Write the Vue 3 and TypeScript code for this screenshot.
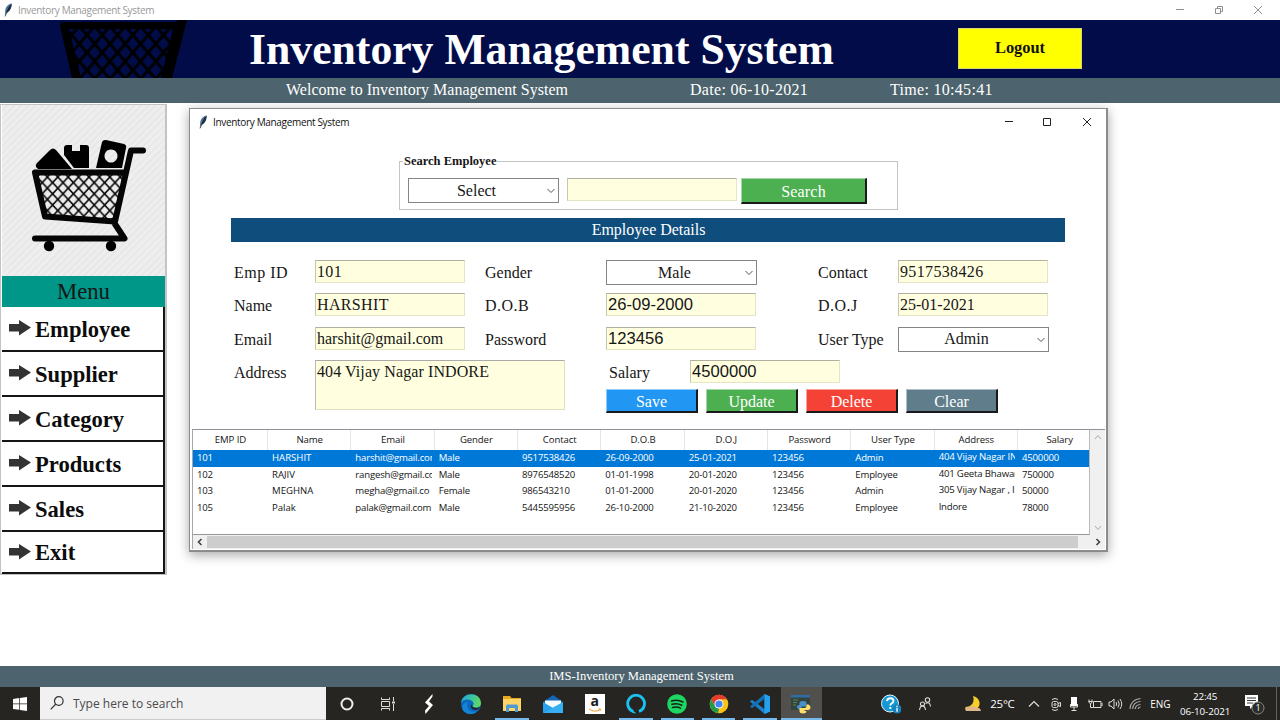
<script setup lang="ts">
interface Employee {
  id: string
  name: string
  email: string
  gender: string
  contact: string
  dob: string
  doj: string
  password: string
  type: string
  address: string
  salary: string
}

const menuItems: string[] = ['Employee', 'Supplier', 'Category', 'Products', 'Sales', 'Exit']

const columns: { key: keyof Employee; label: string }[] = [
  { key: 'id', label: 'EMP ID' },
  { key: 'name', label: 'Name' },
  { key: 'email', label: 'Email' },
  { key: 'gender', label: 'Gender' },
  { key: 'contact', label: 'Contact' },
  { key: 'dob', label: 'D.O.B' },
  { key: 'doj', label: 'D.O.J' },
  { key: 'password', label: 'Password' },
  { key: 'type', label: 'User Type' },
  { key: 'address', label: 'Address' },
  { key: 'salary', label: 'Salary' },
]

const employees: Employee[] = [
  { id: '101', name: 'HARSHIT', email: 'harshit@gmail.com', gender: 'Male', contact: '9517538426', dob: '26-09-2000', doj: '25-01-2021', password: '123456', type: 'Admin', address: '404 Vijay Nagar IN', salary: '4500000' },
  { id: '102', name: 'RAJIV', email: 'rangesh@gmail.co', gender: 'Male', contact: '8976548520', dob: '01-01-1998', doj: '20-01-2020', password: '123456', type: 'Employee', address: '401 Geeta Bhawan', salary: '750000' },
  { id: '103', name: 'MEGHNA', email: 'megha@gmail.co', gender: 'Female', contact: '986543210', dob: '01-01-2000', doj: '20-01-2020', password: '123456', type: 'Admin', address: '305 Vijay Nagar , I', salary: '50000' },
  { id: '105', name: 'Palak', email: 'palak@gmail.com', gender: 'Male', contact: '5445595956', dob: '26-10-2000', doj: '21-10-2020', password: '123456', type: 'Employee', address: 'Indore', salary: '78000' },
]

const selectedId = '101'
</script>

<template>
  <div class="screen">
    <div class="titlebar">
      <svg class="feather" viewBox="0 0 10 14"><path d="M8.600.6C5.400 1 2.600 4 2.300 7.200L1.800 13l1.400-3.200C6 9.600 8.600 5.400 8.600.6z" fill="#4a7197" /><path d="M8.600.6C6.800 3 4.800 5.400 3.200 9.800 6 9.600 9 5.400 8.600.6z" fill="#27384f" /><path d="M7 2.600 2 13.400" stroke="#111" stroke-width=".7" /></svg>
      <span class="win-name main-name">Inventory Management System</span>
      <svg class="main-controls" viewBox="0 0 90 12" fill="none" stroke="#8f8f8f" stroke-width="1"><path d="M1 5.500h8M40.500 4.500h5v5h-5zM42.500 4.500v-2h5v5h-2M79 2l8 8M87 2l-8 8" /></svg>
    </div>
    <header class="header">
      <svg class="header-cart" viewBox="0 0 130 58">
        <defs><pattern id="hmesh" width="15.300" height="17.600" patternUnits="userSpaceOnUse" x="11.700" y="15"><path d="M-3-3.450 18.300 21.050M18.300-3.450-3 21.050" stroke="#000" stroke-width="3" /></pattern></defs>
        <path d="M9 8h108L104 58H19z" fill="url(#hmesh)" />
        <path d="M0 6Q0 2 4 2h112l2-2h9L112 58H101L113 9H9L21 58H12z" fill="#000" />
      </svg>
      <h1>Inventory Management System</h1>
      <button class="logout">Logout</button>
    </header>
    <div class="status">
      <span class="welcome">Welcome to Inventory Management System</span>
      <span class="date">Date: 06-10-2021</span>
      <span class="time">Time: 10:45:41</span>
    </div>

    <main class="workspace">
      <aside class="sidebar">
        <div class="logo">
          <svg viewBox="0 0 116 112">
            <defs><pattern id="mesh" width="10.400" height="11.200" patternUnits="userSpaceOnUse" x="5" y="36"><path d="M-2-2.154 12.400 13.354M12.400-2.154-2 13.354" stroke="#050505" stroke-width="1.600" /></pattern></defs>
            <path d="M4 33h88l-8 46-70-4z" fill="url(#mesh)" />
            <path d="M3 31.500h90M3 31.500l10 44 70 5L99 9.500h12M81 80l11.500 17.500H3" fill="none" stroke="#050505" stroke-width="6" stroke-linecap="round" stroke-linejoin="round" />
            <circle cx="17" cy="105" r="5.200" /><circle cx="79" cy="105" r="5.200" />
            <path d="M6 28q-4-3-1-6L18 9q3-3 6 0l16 19z" />
            <path d="M32 7q0-3 3-3h5v6h8V4h6q3 0 3 3v20H42L32 14z" />
            <path fill-rule="evenodd" d="M70 1q1-2.500 4-2l18 4q3 1 2 4L90 27H64zM79 8.500a6.500 6.500 0 1 0 .01 0z" />
          </svg>
        </div>
        <div class="menu-title">Menu</div>
        <button v-for="item in menuItems" :key="item" class="menu-item">
          <svg viewBox="0 0 22 16"><path d="M0 4h10V0l12 7.500L10 15.500V11.500H0z" fill="#333" /></svg>
          <span>{{ item }}</span>
        </button>
      </aside>

      <section class="window">
        <div class="window-title">
          <svg class="feather" viewBox="0 0 10 14"><path d="M8.600.6C5.400 1 2.600 4 2.300 7.200L1.800 13l1.400-3.200C6 9.600 8.600 5.400 8.600.6z" fill="#4a7197" /><path d="M8.600.6C6.800 3 4.800 5.400 3.200 9.800 6 9.600 9 5.400 8.600.6z" fill="#27384f" /><path d="M7 2.600 2 13.400" stroke="#111" stroke-width=".7" /></svg>
          <span class="win-name">Inventory Management System</span>
          <svg class="controls" viewBox="0 0 90 12" fill="none" stroke="#222" stroke-width="1"><path d="M1 5.500h8M39.500 2.500h7v7h-7zM79 2l8 8M87 2l-8 8" /></svg>
        </div>

        <fieldset class="search">
          <legend>Search Employee</legend>
          <div class="combo">Select<svg viewBox="0 0 8 6"><path d="M.5 1 4 4.500 7.500 1" /></svg></div>
          <div class="entry search-entry"></div>
          <button class="btn green search-btn">Search</button>
        </fieldset>

        <div class="details-bar">Employee Details</div>

        <div class="form">
          <label class="loose">Emp ID</label><div class="entry wide">101</div>
          <label>Gender</label><div class="combo">Male<svg viewBox="0 0 8 6"><path d="M.5 1 4 4.500 7.500 1" /></svg></div>
          <label>Contact</label><div class="entry wide">9517538426</div>
          <label>Name</label><div class="entry wide">HARSHIT</div>
          <label class="loose">D.O.B</label><div class="entry sans">26-09-2000</div>
          <label class="loose">D.O.J</label><div class="entry">25-01-2021</div>
          <label>Email</label><div class="entry">harshit@gmail.com</div>
          <label>Password</label><div class="entry sans">123456</div>
          <label>User Type</label><div class="combo">Admin<svg viewBox="0 0 8 6"><path d="M.5 1 4 4.500 7.500 1" /></svg></div>
        </div>
        <div class="form-bottom">
          <label class="address-label">Address</label>
          <div class="textarea">404 Vijay Nagar INDORE</div>
          <div class="salary-block">
            <div class="salary-row"><label>Salary</label><div class="entry sans">4500000</div></div>
            <div class="actions">
              <button class="btn blue">Save</button>
              <button class="btn green">Update</button>
              <button class="btn red">Delete</button>
              <button class="btn slate">Clear</button>
            </div>
          </div>
        </div>

        <div class="table-frame">
          <div class="table-main">
            <div class="table">
              <div class="row head"><span v-for="c in columns" :key="c.key">{{ c.label }}</span></div>
              <div v-for="e in employees" :key="e.id" class="row" :class="{ selected: e.id === selectedId }">
                <span v-for="c in columns" :key="c.key" :class="c.key"><i>{{ e[c.key] }}</i></span>
              </div>
            </div>
            <div class="vscroll">
              <svg viewBox="0 0 8 6"><path d="M1 5l3-3.500L7 5" /></svg>
              <svg viewBox="0 0 8 6"><path d="M1 1l3 3.500L7 1" /></svg>
            </div>
          </div>
          <div class="hscroll">
            <svg viewBox="0 0 6 8"><path d="M4.500 1 1.500 4l3 3" /></svg>
            <div class="thumb"></div>
            <svg viewBox="0 0 6 8"><path d="M1.500 1l3 3-3 3" /></svg>
          </div>
        </div>
      </section>
    </main>

    <footer class="footer">IMS-Inventory Management System</footer>

    <nav class="taskbar">
      <div class="start"><svg viewBox="0 0 14 14"><path d="M0 2l6.300-.9v5.500H0zM7 1l7-1v6.600H7zM0 7.300h6.300v5.500L0 12zM7 7.300h7V14l-7-1z" fill="#fff" /></svg></div>
      <div class="searchbox"><svg viewBox="0 0 14 14"><circle cx="8.800" cy="5" r="4.300" /><path d="M5.800 8 .7 13.300" /></svg><span>Type here to search</span></div>
      <div class="apps">
        <div class="app"><svg viewBox="0 0 20 20"><circle cx="10" cy="10" r="5.500" fill="none" stroke="#eee" stroke-width="2" /></svg></div>
        <div class="app"><svg viewBox="0 0 20 20" fill="none" stroke="#ddd"><path d="M3.500 7.500h8v5h-8zM3.500 3.500v2h8v-2M3.500 16.500v-2h8v2M15.500 3v4M15.500 10v7" /><path d="M14 8.500h3" stroke-width="2" /></svg></div>
        <div class="app"><svg viewBox="0 0 20 20"><path d="M13.500 0 6 8.500l4 3.500-4 4.500.5 3.500 7.500-9-4-3.500 3.500-5z" fill="#fff" /></svg></div>
        <div class="app"><svg viewBox="0 0 20 20">
          <defs><linearGradient id="edge" x1="0" y1="0" x2="1" y2=".3"><stop offset="0" stop-color="#1ba5e8" /><stop offset="1" stop-color="#5bd76a" /></linearGradient></defs>
          <circle cx="10" cy="10" r="10" fill="#0b68be" /><path d="M0 9C1-2 19-3 20 9c0 4-4 5.500-8 4-1-1 1-2 .5-4C11 5 3 4 0 9z" fill="url(#edge)" /><path d="M7 8c-3 6 2 11 9 9.500-4 4-11 3-14-1C0 12 3 8 7 8z" fill="#1484d6" /><path d="M12 13c3 1.500 6 1 7.500-.5-1 2-3 3.500-5 3.500-3.500 0-6-3-4-6 0 1 0 2 1.500 3z" fill="#22282d" />
        </svg></div>
        <div class="app open"><svg viewBox="0 0 20 20"><path d="M1 2h7l1.500 2H19v13H1z" fill="#e9a91d" /><path d="M1 5h18v12H1z" fill="#fdd466" /><path d="M4 18v-6q0-1.500 1.500-1.500h9Q16 10.500 16 12v6h-3v-4H7v4z" fill="#4a9bd6" /></svg></div>
        <div class="app"><svg viewBox="0 0 20 20"><path d="M0 8l10-7 10 7v11H0z" fill="#1266b4" /><path d="M2 6.500h16V14H2z" fill="#f5fafe" /><path d="M0 8l10 6-10 5z" fill="#2aa1ec" /><path d="M20 8v11H0z" fill="#35aef2" /></svg></div>
        <div class="app amazon"><div><b>a</b><svg viewBox="0 0 14 5"><path d="M1 1q6 4 11 .5M10.500 1l2 0-.5 2" fill="none" stroke="#f29a26" /></svg></div></div>
        <div class="app open"><svg viewBox="0 0 20 20"><path d="M7.200 17.500A8.400 8.400 0 1 1 13 17.500" fill="none" stroke="#19c2f0" stroke-width="2.800" /><path d="M6 16l4.500 3.500-3.800-.5z" fill="#19c2f0" /></svg></div>
        <div class="app open"><svg viewBox="0 0 20 20"><circle cx="10" cy="10" r="9.800" fill="#1ed760" /><path d="M4.500 7q6-1.800 11.500 1M5 10.300q5-1.500 9.800.9M5.500 13.400q4.500-1.200 8 .7" fill="none" stroke="#182019" stroke-width="1.600" stroke-linecap="round" /></svg></div>
        <div class="app open"><svg viewBox="0 0 20 20"><circle cx="10" cy="10" r="9.300" fill="#fbc116" /><path d="M2 5.300A9.300 9.300 0 0 1 18 5.300H10L6 12z" fill="#e33b2e" /><path d="M2 5.300 6.200 12.500 10 14.500 9 19.200A9.300 9.300 0 0 1 2 5.300z" fill="#229b4e" /><circle cx="10" cy="10" r="4.500" fill="#fff" /><circle cx="10" cy="10" r="3.600" fill="#4285f4" /></svg></div>
        <div class="app open"><svg viewBox="0 0 20 20"><path d="M14.500 0 20 2.500v15L14.500 20 0 7.500 2 5.700l12.500 9.500z" fill="#1782ce" /><path d="M14.500 0v4.800L2 14.300 0 12.500z" fill="#1270b8" /><path d="M14.500 0 20 2.500v15L14.500 20z" fill="#25a0ef" /></svg></div>
        <div class="app open active"><svg viewBox="0 0 20 20"><path d="M0 1h19v15H0z" fill="#34443d" /><path d="M0 1h19v2.500H0z" fill="#2f6ca5" /><path d="M2 6h5M2 8.500h4M2 11h3" stroke="#568557" /><path d="M8.500 11V9q0-2 3.500-2t3.500 2v3.500h-5v3H8q-2-.5-2-2.700T8.500 11z" fill="#4a90c8" /><path d="M15.500 10.500h2q2 1 2 3t-2 2.500h-4v1h2q0 2.500-3.500 2.500t-3.500-2.500V14h5q2 0 2-2z" fill="#ffdf68" /></svg></div>
      </div>
      <div class="tray">
        <div class="t-help"><svg viewBox="0 0 20 20"><circle cx="9" cy="9.500" r="8.500" fill="#1598d3" stroke="#e8f5fb" /><path d="M6 7.200q.3-3 3.300-3t3.200 2.600q0 1.700-2 2.700-1.200.7-1.200 2M9.300 13v2" fill="none" stroke="#fff" stroke-width="1.900" /><circle cx="16" cy="15" r="4.600" fill="#1684bd" /><path d="M16 13.800v4M16 11.800v1.200" stroke="#fff" stroke-width="1.300" /></svg></div>
        <div class="t-people"><svg viewBox="0 0 14 14" fill="none" stroke="#ddd" stroke-width="1.100"><circle cx="4.500" cy="7" r="2" /><path d="M1.500 13q.5-4 3-4t3 4" /><circle cx="9.500" cy="3" r="2.200" /><path d="M7.500 6.500q4.500-2.500 5 3" /></svg></div>
        <div class="t-moon"><svg viewBox="0 0 20 18"><path d="M10 1c9 2 9 14-1 14-5 0-7-3-7-3 7 0 10-5 8-11z" fill="#f9cd27" /><path d="M2 14q1-3 5-2 4-3 6 1 4-1 5 3H3z" fill="#dfb789" /></svg></div>
        <span class="temp">25°C</span>
        <div class="t-caret"><svg viewBox="0 0 12 8"><path d="M1 6.500 6 1.500l5 5" fill="none" stroke="#ddd" stroke-width="1.200" /></svg></div>
        <div class="t-cam"><svg viewBox="0 0 12 14" fill="none" stroke="#ddd"><rect x="2" y="4.500" width="6" height="6" rx="1.500" /><circle cx="5" cy="7.500" r="1" /><path d="M8 6.500l2.500-1v4l-2.500-1M2 2.500q3-2 6 0M2 12.500q3 2 6 0" /></svg></div>
        <div class="t-mic"><svg viewBox="0 0 12 14"><rect x="3" y="0" width="6" height="9" fill="#fff" /><path d="M2.500 7v3h7V7M6 10v3.500M3.500 13.500h5" stroke="#ddd" fill="none" /></svg></div>
        <div class="t-bat"><svg viewBox="0 0 15 12" fill="none" stroke="#ddd"><path d="M5.500 3.500h7.500v6H5.500zM14 5v3M1 1.500v3q1.500 2 3 0v-3M2.500 5.500v4h3M.5 3.500h4" /></svg></div>
        <div class="t-vol"><svg viewBox="0 0 15 12" fill="none" stroke="#ddd"><path d="M1 4h2l3-3v10L3 8H1zM8 4q1.500 2 0 4M10 2.500q2.500 3.500 0 7M12 1q3.500 5 0 10" /></svg></div>
        <div class="t-wifi"><svg viewBox="0 0 13 13" fill="none" stroke="#aaa" stroke-width="1.200"><path d="M1 12Q1.500 2.500 11.500 1.500M3.700 12Q4 5 11.500 4.500M6.300 12q.2-4.300 5.200-4.500M9 12q.3-1.800 2.500-2" /></svg></div>
        <span class="lang">ENG</span>
        <div class="clock"><span>22:45</span><span>06-10-2021</span></div>
        <div class="notice"><svg viewBox="0 0 22 22"><path d="M1 2h13v11H9l-3 3v-3H1z" fill="#fff" /><path d="M3 5h9M3 7.500h9M3 10h6" stroke="#333" /><circle cx="14" cy="15" r="6" fill="#2c2c2b" stroke="#888" /></svg><b>1</b></div>
      </div>
      <div class="peek"></div>
    </nav>
  </div>
</template>

<style>
body { margin: 0; overflow: hidden; }
</style>

<style scoped>
* { box-sizing: border-box; }
.screen { width: 1280px; height: 720px; display: flex; flex-direction: column; background: #fff; overflow: hidden; font-family: "Liberation Serif", "Times New Roman", serif; color: #161616; }
button { font-family: inherit; margin: 0; padding: 0; border-radius: 0; white-space: nowrap; }
svg { display: block; flex: none; }
.titlebar { height: 19.500px; flex: none; display: flex; align-items: center; padding-left: 3px; }
.feather { width: 10px; height: 14px; }
.win-name { font: 10px/14px "Open Sans", sans-serif; letter-spacing: -.33px; white-space: nowrap; color: #111; }
.main-name { color: #999; margin-left: 5px; }
.main-controls { width: 90px; height: 12px; margin: 0 15px 0 auto; }
.header { height: 58px; flex: none; background: #010c48; display: flex; align-items: flex-start; overflow: hidden; }
.header-cart { width: 130px; height: 58px; margin-left: 60px; }
h1 { margin: 3px 0 0 59px; width: 609px; font-size: 43.700px; line-height: 52px; color: #fff; font-weight: bold; white-space: nowrap; }
.logout { width: 124px; height: 41px; margin: 8px 0 0 100px; background: #ff0; border: 1px solid #d7d774; font-size: 16.400px; font-weight: bold; color: #111; }
.status { height: 25.500px; flex: none; background: #4d636d; color: #fff; display: flex; align-items: center; font-size: 16px; line-height: 24px; white-space: nowrap; padding-bottom: 1px; }
.welcome { width: 404px; margin-left: 286px; letter-spacing: .02px; }
.date { width: 200px; letter-spacing: .3px; }
.time { letter-spacing: .3px; }
.workspace { height: 563px; flex: none; position: relative; padding-top: 1px; }
.sidebar { width: 167px; height: 471px; border: 2px solid #c3c3c3; border-left-width: 1px; border-top-width: 1px; display: flex; flex-direction: column; padding-left: 1px; }
.logo { height: 171px; flex: none; background: repeating-linear-gradient(135deg, #eee 0 3px, #e8e8e8 3px 5px); display: flex; align-items: flex-start; justify-content: center; padding-top: 36px; }
.logo svg { width: 116px; height: 112px; margin-left: 13px; overflow: visible; }
.menu-title { height: 31px; flex: none; background: #009688; text-align: center; font-size: 22.700px; line-height: 31px; }
.menu-item { height: 45px; flex: none; background: #fff; border: solid #151515; border-width: 0 2px 2px 0; display: flex; align-items: center; padding: 2px 0 0 7px; font-size: 22.600px; font-weight: bold; color: #0c0c0c; }
.menu-item:last-child { height: 42px; }
.menu-item svg { width: 22px; height: 16px; margin-top: -3px; }
.menu-item span { margin-left: 4px; }

.window { position: absolute; left: 189px; top: 5px; width: 919px; height: 444px; background: #fff; border: 1px solid #8c8c8c; border-width: 1px 2px 2px 1px; box-shadow: 0 3px 11px rgba(0, 0, 0, .35); display: flex; flex-direction: column; }
.window-title { height: 26px; flex: none; display: flex; align-items: center; padding-left: 8px; }
.window-title .win-name { margin-left: 5px; }
.controls { width: 90px; height: 12px; margin: 0 12px 0 auto; }
.search { width: 499px; height: 56px; flex: none; margin: 19px 0 0 209px; padding: 10px 0 0 8px; border: 2px solid #c4c4c4; border-width: 1.500px; display: flex; align-items: flex-start; }
legend { margin-left: -5px; padding: 0 1px; height: 14px; font-size: 12.500px; line-height: 14px; font-weight: bold; white-space: nowrap; }
.combo { width: 151px; height: 25px; border: 1px solid #858585; background: #fff; display: flex; align-items: center; justify-content: center; padding-right: 14px; position: relative; font-size: 16px; line-height: 22px; }
.combo svg { position: absolute; right: 3px; top: 9px; width: 8px; height: 6px; fill: none; stroke: #555; }
.entry { width: 150px; height: 23px; background: #ffffe0; border: 1px solid #e5e5c4; border-top-color: #b0b0a0; border-left-color: #c6c6b2; padding-left: 1px; font-size: 16px; line-height: 21px; white-space: nowrap; }
.entry.wide { letter-spacing: .35px; }
.entry.sans { font: 16.600px/22px "Liberation Sans", Arial, sans-serif; padding-left: 1px; }
.search-entry { width: 170px; margin-left: 8px; }
.btn { height: 24px; width: 92px; border: solid #1a1a1a; border-width: 1px 2px 2px 1px; border-top-color: rgba(255, 255, 255, .5); border-left-color: rgba(255, 255, 255, .5); color: #fff; font-size: 16px; line-height: 20px; padding-top: 2px; background-clip: border-box; }
.green { background: #4caf50; }
.blue { background: #2196f3; }
.red { background: #f44336; }
.slate { background: #607d8b; }
.search-btn { width: 126px; height: 26px; margin-left: 4px; letter-spacing: .2px; }
.details-bar { width: 834px; height: 24px; flex: none; margin: 8px 0 0 41px; background: #0f4d7d; color: #fff; text-align: center; font-size: 16px; line-height: 24px; letter-spacing: -.03px; padding-left: 1px; }
.form { display: grid; grid-template-columns: 81px 170px 121px 212px 80px 151px; grid-template-rows: repeat(3, 33.300px); margin: 18px 0 0 44px; flex: none; }
label { font-size: 16px; line-height: 25px; white-space: nowrap; }
.loose { letter-spacing: .5px; }
.form-bottom { display: flex; height: 54px; flex: none; margin-left: 44px; }
.address-label { width: 81px; }
.textarea { width: 250px; height: 50px; background: #ffffe0; border: 1px solid #e0e0c0; border-top-color: #aaa; border-left-color: #bbb; padding-left: 1px; font-size: 16px; line-height: 21px; letter-spacing: .1px; }
.salary-block { margin-left: 41px; }
.salary-row { display: flex; padding-left: 3px; height: 29px; }
.salary-row label { width: 81px; }
.actions { display: flex; gap: 8px; }

.table-frame { margin: 15px 0 0 2px; width: 913px; flex: none; border-top: 1px solid #8e9299; border-left: 1px solid #a5a8ac; font: 9.600px/16px "Open Sans", "Noto Sans", sans-serif; }
.table-main { display: flex; height: 105px; }
.table { width: 897px; overflow: hidden; border-bottom: 1px solid #999; border-right: 1px solid #bbb; }
.row { display: grid; width: 908.300px; height: 16.670px; grid-template-columns: 75px repeat(10, 83.330px); color: #151515; }
.row span { padding: 0 3px 0 4px; white-space: nowrap; overflow: hidden; letter-spacing: -.18px; }
.row .name { letter-spacing: 0; }
.row i { display: block; font-style: normal; overflow: hidden; height: 17px; }
.row .address i { margin-top: -1px; }
.row.head { height: 20px; line-height: 20px; text-align: center; }
.row.head span { border-right: 1px solid #e5e5e5; letter-spacing: -.1px; }
.row.selected { background: #0078d7; color: #fff; }
.vscroll { width: 15px; background: #f0f0f0; display: flex; flex-direction: column; justify-content: space-between; align-items: center; padding: 4px 0; }
.vscroll svg { width: 8px; height: 6px; fill: none; stroke: #aaa; }
.hscroll { height: 14px; background: #f0f0f0; display: flex; align-items: center; justify-content: space-between; padding: 0 4px; }
.hscroll svg { width: 6px; height: 8px; fill: none; stroke: #444; stroke-width: 1.600; }
.thumb { width: 871px; height: 12px; background: #cdcdcd; margin-right: 14px; }

.footer { height: 21px; flex: none; background: #4d636d; color: #fff; text-align: center; font-size: 12.600px; line-height: 21px; padding-left: 3px; }
.taskbar { height: 33px; flex: none; background: #262522; display: flex; color: #fff; font-family: "Open Sans", "Noto Sans", sans-serif; }
.start { width: 40px; display: flex; align-items: center; justify-content: center; }
.start svg { width: 14px; height: 14px; }
.searchbox { width: 286px; background: #f1f1f1; border-bottom: 1px solid #ccc; display: flex; align-items: center; padding-left: 10px; color: #4b4b4b; font-size: 12px; }
.searchbox svg { width: 14px; height: 14px; fill: none; stroke: #333; stroke-width: 1.200; }
.searchbox span { margin-left: 9px; white-space: nowrap; }
.apps { display: flex; }
.app { width: 41.350px; display: flex; justify-content: center; align-items: center; position: relative; }
.app > svg { width: 20px; height: 20px; }
.open::after { content: ""; position: absolute; left: 4px; right: 4px; bottom: 0; height: 2px; background: #76b9ed; }
.active { background: #52504d; }
.active::after { left: 0; right: 0; }
.amazon div { width: 20px; height: 20px; background: #fff; color: #181818; display: flex; flex-direction: column; align-items: center; }
.amazon b { font-size: 14px; line-height: 14px; }
.amazon svg { width: 14px; height: 5px; }
.tray { margin-left: 53px; display: flex; align-items: center; }
.tray > div { display: flex; justify-content: center; flex: none; }
.t-help { width: 32px; } .t-help svg { width: 20px; height: 20px; }
.t-people { width: 35px; } .t-people svg { width: 14px; height: 14px; }
.t-moon { width: 60px; padding-left: 2px; } .t-moon svg { width: 20px; height: 18px; }
.temp { width: 26px; margin-left: -12px; font-size: 11.500px; letter-spacing: -.2px; white-space: nowrap; }
.t-caret { width: 34px; padding-left: 2px; } .t-caret svg { width: 12px; height: 8px; }
.t-cam { width: 12px; } .t-cam svg { width: 12px; height: 14px; }
.t-mic { width: 24px; } .t-mic svg { width: 12px; height: 14px; }
.t-bat { width: 18px; } .t-bat svg { width: 15px; height: 12px; }
.t-vol { width: 22px; } .t-vol svg { width: 15px; height: 12px; }
.t-wifi { width: 18px; } .t-wifi svg { width: 13px; height: 13px; }
.lang { width: 30px; padding-left: 6px; font-size: 10px; }
.tray > .clock { width: 62px; display: flex; flex-direction: column; align-items: center; font-size: 9.800px; line-height: 15px; letter-spacing: -.1px; white-space: nowrap; }
.tray > .notice { width: 22px; height: 22px; position: relative; margin-left: 8px; }
.notice svg { width: 22px; height: 22px; }
.notice b { position: absolute; left: 8px; top: 8px; width: 12px; text-align: center; font-size: 9px; line-height: 14px; font-weight: normal; }
.peek { width: 1px; margin-left: auto; margin-right: 3px; background: #62615f; }
</style>
